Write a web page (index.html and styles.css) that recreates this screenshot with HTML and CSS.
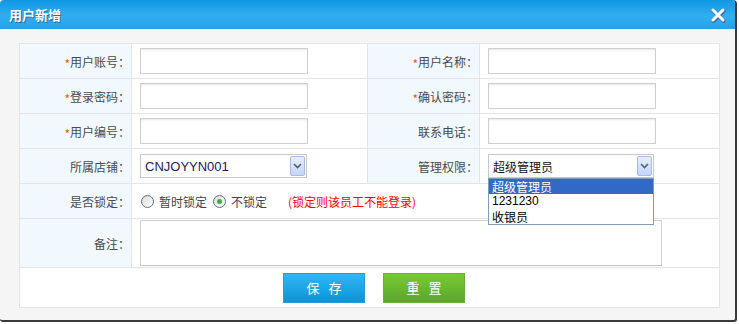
FILE: index.html
```html
<!DOCTYPE html>
<html>
<head>
<meta charset="utf-8">
<link rel="stylesheet" href="styles.css">
</head>
<body>
<div class="dialog">
  <div class="header">
    <span class="title">用户新增</span>
    <svg class="close" width="16" height="16" viewBox="0 0 16 16">
      <path d="M3 3 L13 13 M13 3 L3 13" stroke="#3a6f99" stroke-width="4" stroke-linecap="round" transform="translate(0.6,0.8)"/>
      <path d="M3 3 L13 13 M13 3 L3 13" stroke="#fff" stroke-width="3" stroke-linecap="round"/>
    </svg>
  </div>
  <div class="body">
    <table class="form">
      <colgroup><col class="c1"><col class="c2"><col class="c3"><col class="c4"></colgroup>
      <tr>
        <td class="lbl"><span class="req">*</span>用户账号：</td>
        <td class="val"><span class="input"></span></td>
        <td class="lbl"><span class="req">*</span>用户名称：</td>
        <td class="val"><span class="input"></span></td>
      </tr>
      <tr>
        <td class="lbl"><span class="req">*</span>登录密码：</td>
        <td class="val"><span class="input"></span></td>
        <td class="lbl"><span class="req">*</span>确认密码：</td>
        <td class="val"><span class="input"></span></td>
      </tr>
      <tr>
        <td class="lbl"><span class="req">*</span>用户编号：</td>
        <td class="val"><span class="input"></span></td>
        <td class="lbl">联系电话：</td>
        <td class="val"><span class="input"></span></td>
      </tr>
      <tr>
        <td class="lbl">所属店铺：</td>
        <td class="val"><span class="select"><span class="sel-text latin">CNJOYYN001</span><span class="arrow"><svg width="9" height="6" viewBox="0 0 9 6"><path d="M1 1 L4.5 4.5 L8 1" fill="none" stroke="#4d6185" stroke-width="1.6"/></svg></span></span></td>
        <td class="lbl">管理权限：</td>
        <td class="val">
          <div class="select-wrap">
            <span class="select sel2"><span class="sel-text">超级管理员</span><span class="arrow"><svg width="9" height="6" viewBox="0 0 9 6"><path d="M1 1 L4.5 4.5 L8 1" fill="none" stroke="#4d6185" stroke-width="1.6"/></svg></span></span>
            <ul class="dropdown">
              <li class="active">超级管理员</li>
              <li class="latin">1231230</li>
              <li>收银员</li>
            </ul>
          </div>
        </td>
      </tr>
      <tr>
        <td class="lbl">是否锁定：</td>
        <td class="val" colspan="3">
          <div class="radios">
            <span class="radio"></span><span class="rtext">暂时锁定</span>
            <span class="radio on"></span><span class="rtext">不锁定</span>
            <span class="warn">(锁定则该员工不能登录)</span>
          </div>
        </td>
      </tr>
      <tr class="remark">
        <td class="lbl">备注：</td>
        <td class="val" colspan="3"><span class="textarea"></span></td>
      </tr>
      <tr class="actions">
        <td colspan="4">
          <div class="btns">
            <span class="btn save">保 存</span>
            <span class="btn reset">重 置</span>
          </div>
        </td>
      </tr>
    </table>
  </div>
</div>
</body>
</html>
```

FILE: styles.css
```css
html, body {
  margin: 0;
  padding: 0;
  background: #ffffff;
}
body {
  font-family: "Noto Sans CJK SC", "Liberation Sans", sans-serif;
  font-size: 12px;
  color: #444;
}
.dialog {
  width: 735px;
  height: 320px;
  background: #f5f5f5;
  border-right: 2px solid #3a3a3a;
  border-bottom: 2px solid #3a3a3a;
  border-radius: 4px 4px 3px 3px;
  overflow: hidden;
}
.header {
  height: 29px;
  background: linear-gradient(#0f98e3, #34adf2 55%, #22a2ec);
  display: flex;
  align-items: center;
  justify-content: space-between;
  padding: 0 9px 0 9px;
}
.title {
  color: #fff;
  font-weight: bold;
  font-size: 13px;
  text-shadow: 1px 1px 0 #2b6a96;
}
.close {
  display: block;
  margin-top: 1px;
}
.body {
  padding: 14px 19px 0 19px;
}
.form {
  border-collapse: collapse;
  table-layout: fixed;
  width: 700px;
  background: #fff;
}
.form td {
  border: 1px solid #e4e4e4;
  padding: 0;
  height: 34px;
}
.c1 { width: 112px; }
.c2 { width: 236px; }
.c3 { width: 112px; }
.c4 { width: 240px; }
.lbl {
  background: #f1f8fe;
  text-align: right;
  padding-right: 1px !important;
  color: #4a4a4a;
}
.req {
  color: #ff5400;
  font-size: 12px;
  position: relative;
  top: 2px;
}
.val {
  padding-left: 8px !important;
}
.input {
  display: block;
  width: 166px;
  height: 24px;
  border: 1px solid #cfcfcf;
  box-shadow: inset 0 1px 2px #e6e6e6;
  background: #fff;
}
.select {
  display: flex;
  align-items: center;
  justify-content: space-between;
  width: 165px;
  height: 22px;
  border: 1px solid #c8c8c8;
  background: #fff;
  box-sizing: content-box;
}
.sel2 {
  width: 164px;
}
.sel-text {
  padding-left: 4px;
  color: #111;
}
.latin {
  font-family: "Liberation Sans", "Noto Sans CJK SC", sans-serif;
}
.sel-text.latin {
  color: #1a1a60;
  font-size: 13px;
}
.arrow {
  width: 15px;
  height: 20px;
  margin-right: 1px;
  border: 1px solid #a8bbe4;
  border-radius: 2px;
  background: linear-gradient(#e6eefc, #c5d5f6);
  display: flex;
  align-items: center;
  justify-content: center;
  box-sizing: border-box;
}
.select-wrap {
  position: relative;
}
.dropdown {
  position: absolute;
  left: 0;
  top: 24px;
  margin: 0;
  padding: 0;
  list-style: none;
  width: 164px;
  border: 1px solid #7f9db9;
  background: #fff;
  z-index: 5;
}
.dropdown li {
  height: 15px;
  line-height: 15px;
  padding-left: 3px;
  color: #000;
  font-size: 12px;
  overflow: hidden;
}
.dropdown li.latin {
  font-size: 12px;
}
.dropdown li.active {
  background: #316ac5;
  color: #fff;
}
.radios {
  display: flex;
  align-items: center;
  padding-left: 1px;
}
.radio {
  width: 11px;
  height: 11px;
  border: 1px solid #55708f;
  border-radius: 50%;
  background: linear-gradient(135deg, #dcdcd8, #ffffff);
  display: flex;
  align-items: center;
  justify-content: center;
  margin-right: 5px;
}
.radio.on::after {
  content: "";
  width: 5px;
  height: 5px;
  border-radius: 50%;
  background: #3cb23c;
}
.rtext {
  margin-right: 6px;
  color: #444;
}
.warn {
  color: #f00;
  margin-left: 15px;
}
.remark td {
  height: 48px;
}
.textarea {
  display: block;
  width: 520px;
  height: 44px;
  border: 1px solid #cfcfcf;
  border-bottom-color: #c4c4c4;
  background: #fff;
}
.actions td {
  height: 39px;
}
.btns {
  display: flex;
  justify-content: center;
  gap: 18px;
  padding-left: 9px;
}
.btn {
  width: 80px;
  height: 28px;
  display: flex;
  align-items: center;
  justify-content: center;
  color: #fff;
  font-size: 13px;
  letter-spacing: 3px;
  text-indent: 3px;
}
.save {
  background: linear-gradient(#33b6f4, #0a95d6);
  border: 1px solid #2a9ad4;
}
.reset {
  background: linear-gradient(#77cb32, #5da52d);
  border: 1px solid #68b035;
}
```
